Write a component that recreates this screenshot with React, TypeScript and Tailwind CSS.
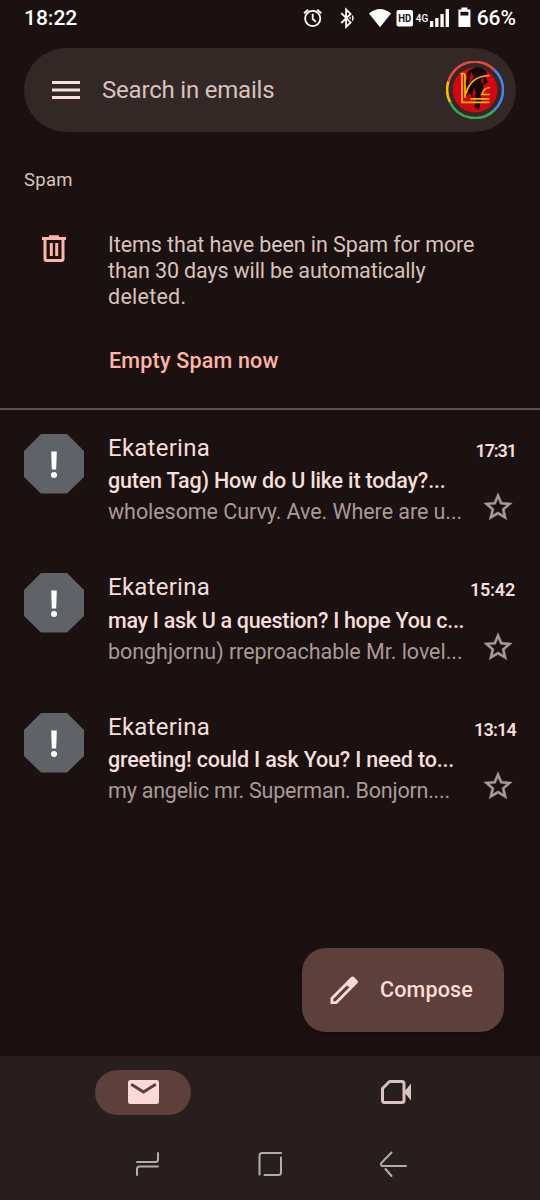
const mails = [
  {
    time: "17:31",
    subject: "guten Tag) How do U like it today?...",
    snippet: "wholesome Curvy. Ave. Where are u...",
    timeClass: "tracking-[-1.1px]",
    subjectClass: "tracking-[-0.18px]",
    snippetClass: "tracking-[-0.06px]",
  },
  {
    time: "15:42",
    subject: "may I ask U a question? I hope You c...",
    snippet: "bonghjornu) rreproachable Mr. lovel...",
    timeClass: "tracking-[-0.2px] mr-px",
    subjectClass: "tracking-[-0.3px]",
    snippetClass: "tracking-[-0.04px]",
  },
  {
    time: "13:14",
    subject: "greeting! could I ask You? I need to...",
    snippet: "my angelic mr. Superman. Bonjorn....",
    timeClass: "tracking-[-0.8px]",
    subjectClass: "tracking-[-0.17px]",
    snippetClass: "tracking-[-0.22px]",
  },
];

function StatusBar() {
  return (
    <header className="flex h-9 shrink-0 items-center px-6 text-white">
      <span className="text-[21px] font-medium leading-none">18:22</span>
      <svg className="ml-auto" width="174" height="30" viewBox="0 0 174 30" fill="none" stroke="#fff">
        <circle cx="10.7" cy="15.500" r="7.6" strokeWidth="1.8" />
        <path d="M10.700 10.800v5.200l3.200 2.700M2 10.300l4.200-3.600M19.400 10.300l-4.200-3.600" strokeWidth="1.8" />
        <path d="M39.300 10.200l9.300 9.200-4.500 4.400V6.500l4.500 4.400-9.300 9.100" strokeWidth="1.8" />
        <path d="M47.300 15.100h1.700M50.400 12.500q1.200 2.600 0 5.200" strokeWidth="1.5" />
        <path d="M67 10.500Q78 1.500 89 10.500L78 24.300z" fill="#fff" stroke="none" />
        <rect x="94.500" y="7" width="16.500" height="16.500" rx="2" fill="#fff" stroke="none" />
        <text x="96.300" y="19" fontSize="10.500" fontWeight="700" textLength="13" lengthAdjust="spacingAndGlyphs" fill="#1b1110" stroke="none" className="font-['Roboto']">HD</text>
        <text x="113.800" y="19.200" fontSize="10.500" fontWeight="500" textLength="12.500" lengthAdjust="spacingAndGlyphs" fill="#fff" stroke="none" className="font-['Roboto']">4G</text>
        <path d="M128 18h3.300v6H128zM133.200 15h3.300v9h-3.300zM138.400 11h3.300v13h-3.300zM143.600 6h3.400v18h-3.400z" fill="#fff" stroke="none" />
        <path d="M156.400 6.500h3V4.500h6v2h3V24h-12z" fill="#fff" stroke="none" />
        <path d="M158.400 8.800h8v3.700h-8z" fill="#1b1110" stroke="none" />
      </svg>
      <span className="ml-px text-[21px] font-medium leading-none">66%</span>
    </header>
  );
}

function Avatar() {
  return (
    <svg width="58" height="58" viewBox="0 0 58 58" fill="none">
      <g strokeWidth="2.600">
        <path d="M2.400 20.500A27.500 27.500 0 0 1 48.400 9" stroke="#e24a3e" />
        <path d="M48.400 9A27.500 27.500 0 0 1 48.400 49" stroke="#4285f4" />
        <path d="M48.400 49A27.500 27.500 0 0 1 4 41" stroke="#34a853" />
        <path d="M4 41A27.500 27.500 0 0 1 2.400 20.500" stroke="#fbbc04" />
      </g>
      <circle cx="29" cy="29" r="22.500" fill="#d20712" />
      <path d="M24 9l-4 4 2 4-4 5 3 5-1 8 4-3 2 6 3-4 1 5-2 7 5 3 1-6 2-5-2-4 4-3-1-6 5-4-3-6 2-4-5-4-6-1z" fill="#170605" />
      <path d="M25 11l3 5-5 7 1-7zM37 14l-2 6 3 5zM28 26l2 7-4 3z" fill="#c40812" />
      <path d="M14.500 12.700h4.300M16 12.700v28.600h27.500M19 12.700v24M24.500 37.800h19M20 33Q24 15 43.500 14.500M44 26.500Q37 27 36 33.500h8" stroke="#f5b80c" strokeWidth="1.700" />
    </svg>
  );
}

function Star() {
  return (
    <svg width="30" height="30" viewBox="1.5 1.500 21 21" fill="#a99a98" stroke="#a99a98" strokeWidth="0.250">
      <path d="M22 9.240l-7.190-.620L12 2 9.190 8.630 2 9.240l5.460 4.730L5.820 21 12 17.270 18.180 21l-1.630-7.030L22 9.240zM12 15.400l-3.760 2.270 1-4.280-3.320-2.880 4.380-.380L12 6.100l1.710 4.040 4.380.380-3.320 2.880 1 4.280L12 15.400z" />
    </svg>
  );
}

function MailRow({ mail }: { mail: (typeof mails)[number] }) {
  return (
    <article className="flex h-[139.5px] px-6 pt-[23.5px]">
      <svg className="shrink-0" width="60" height="60" viewBox="0 0 60 60">
        <g transform="translate(0 -0.4)">
          <path d="M17 0.400h26l17 17v26L43 60H17L0 43.400v-26z" fill="#5f6367" />
          <path d="M27.200 18h5.600l-.6 18h-4.400z" fill="#fff" />
          <circle cx="30" cy="41.500" r="3" fill="#fff" />
        </g>
      </svg>
      <div className="ml-6 flex min-w-0 flex-1 flex-col whitespace-nowrap">
        <div className="mb-[2.5px] flex h-[29px] items-center justify-between">
          <h2 className="text-[24px] leading-[29px] tracking-[0.25px] text-[#f5dedb]">Ekaterina</h2>
          <time className={`mt-1 text-[18px] font-semibold text-[#f5dedb] ${mail.timeClass}`}>{mail.time}</time>
        </div>
        <div className="flex justify-between">
          <div className="w-[360px]">
            <p className={`text-[21.5px] font-medium leading-[31px] text-[#f5dedb] ${mail.subjectClass}`}>{mail.subject}</p>
            <p className={`text-[21.5px] leading-[31px] text-[#a99a98] ${mail.snippetClass}`}>{mail.snippet}</p>
          </div>
          <button className="mr-[3px] mt-[27px] self-start" aria-label="Star"><Star /></button>
        </div>
      </div>
    </article>
  );
}

function BottomNav() {
  return (
    <nav className="mt-6 h-[144px] shrink-0 bg-[#271e1d] pt-[13.5px]">
      <div className="flex h-[45px] items-center pl-[95px]">
        <div className="flex h-[45px] w-[96px] items-center justify-center rounded-full bg-[#5d403c]">
          <svg width="31" height="24" viewBox="0 0 31 24">
            <rect width="31" height="24" rx="2.500" fill="#ffdad5" />
            <path d="M3.200 4.300l12.300 7.700 12.300-7.700" fill="none" stroke="#5d403c" strokeWidth="3" />
          </svg>
        </div>
        <svg className="ml-[190px]" width="30" height="24" viewBox="0 0 30 24">
          <path d="M8.500 1.500H21q2 0 2 2v17q0 2-2 2H3.500q-2 0-2-2V8.500z" fill="none" stroke="#d8c2be" strokeWidth="3" strokeLinejoin="round" />
          <path d="M23 12l7-8.500v17z" fill="#d8c2be" />
        </svg>
      </div>
      <div className="mt-[35.5px] flex items-center pl-[134.5px] text-[#b5adac]">
        <svg width="26" height="28" viewBox="0 0 26 28" fill="none" stroke="currentColor" strokeWidth="2" strokeLinecap="round">
          <path d="M23 3v6.500q0 2.500-2.500 2.500H2M23 16.500H4.500Q2 16.500 2 19v6" />
        </svg>
        <svg className="ml-[96px]" width="26" height="28" viewBox="0 0 26 28" fill="none" stroke="currentColor" strokeWidth="2" strokeLinecap="round">
          <path d="M2.500 24.500V5.500q0-2.500 2.500-2.500h19M7.500 25H21.500q2.500 0 2.500-2.500v-15" />
        </svg>
        <svg className="ml-[96px]" width="30" height="28" viewBox="0 0 30 28" fill="none" stroke="currentColor" strokeWidth="2" strokeLinecap="round">
          <path d="M12.500 2.500L2.300 13q-1.300 2.800 1.500 3H27M6.500 19l6 7" />
        </svg>
      </div>
    </nav>
  );
}

export default function App() {
  return (
    <div className="flex h-[1200px] w-[540px] flex-col overflow-hidden bg-[#1b1110] font-['Roboto',sans-serif]">
      <StatusBar />
      <div className="mx-6 mt-3 flex h-[84px] shrink-0 items-center rounded-full bg-[#332826] pl-7 pr-3">
        <svg width="28" height="18" viewBox="0 0 28 18" fill="#f5dedb">
          <path d="M0 0h28v3H0zM0 7.500h28v3H0zM0 15h28v3H0z" />
        </svg>
        <span className="ml-[22px] flex-1 text-[24px] tracking-[-0.2px] text-[#d8c2be]">Search in emails</span>
        <Avatar />
      </div>
      <h1 className="ml-6 mt-[36px] h-6 shrink-0 text-[18.5px] leading-6 tracking-[0.3px] text-[#d8c2be]">Spam</h1>
      <section className="mt-[39px] flex h-[179px] shrink-0 border-b-2 border-[#5a5150] pl-[42px]">
        <svg className="mt-[4px]" width="24" height="28" viewBox="0 0 24 28" fill="none" stroke="#ffb4a9" strokeWidth="3">
          <path d="M0 3.500h24M7 1.800h10M3 3v21q0 1.500 1.500 1.500h15q1.500 0 1.500-1.500V3M9.300 8v13M14.700 8v13" />
        </svg>
        <div className="ml-[42px] whitespace-nowrap pt-[0.5px] text-[21.5px]">
          <p className="leading-[26px] tracking-[-0.1px] text-[#d8c2be]">
            Items that have been in Spam for more
            <br />
            <span className="tracking-[-0.15px]">than 30 days will be automatically</span>
            <br />
            <span className="tracking-[0.25px]">deleted.</span>
          </p>
          <button className="ml-px mt-[37.5px] block font-medium leading-[28px] tracking-[0.2px] text-[#ffb4a9]">Empty Spam now</button>
        </div>
      </section>
      <main className="h-[538px] shrink-0">
        {mails.map((mail) => (
          <MailRow key={mail.time} mail={mail} />
        ))}
      </main>
      <button className="mr-9 flex h-[84px] w-[202px] shrink-0 items-center self-end rounded-[24px] bg-[#5d403c] pl-7 text-[#ffdad5] shadow-lg">
        <svg width="28" height="28" viewBox="0 0 28 28" fill="currentColor" fillRule="evenodd">
          <path d="M0.500 28v-6.300L20.800 1.300q1.700-1.600 3.400 0l2.900 2.900q1.600 1.700 0 3.400L6.800 28zM3.300 25.200h2.300L19.300 11.500 17 9.200 3.300 22.900z" />
        </svg>
        <span className="ml-[22px] pt-px text-[21.5px] font-medium tracking-[0.15px]">Compose</span>
      </button>
      <BottomNav />
    </div>
  );
}
